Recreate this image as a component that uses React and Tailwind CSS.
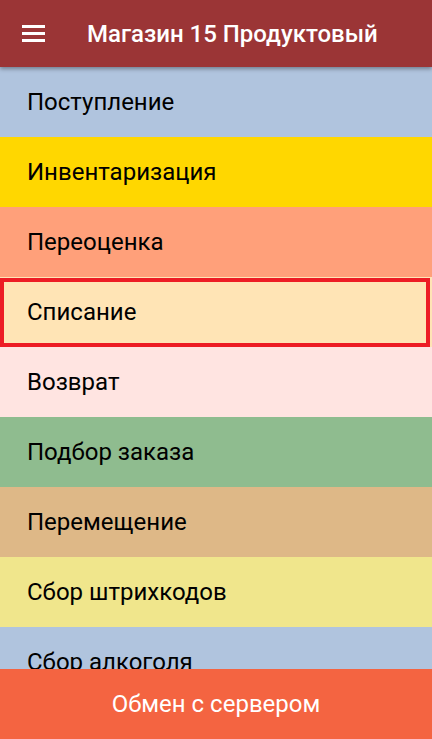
import React from 'react';

const items = [
  { label: 'Поступление', bg: 'bg-[#b0c4de]' },
  { label: 'Инвентаризация', bg: 'bg-[#ffd700]' },
  { label: 'Переоценка', bg: 'bg-[#ffa07a]' },
  { label: 'Списание', bg: 'bg-[#ffe4b5]', selected: true },
  { label: 'Возврат', bg: 'bg-[#ffe4e1]' },
  { label: 'Подбор заказа', bg: 'bg-[#8fbc8f]' },
  { label: 'Перемещение', bg: 'bg-[#deb887]' },
  { label: 'Сбор штрихкодов', bg: 'bg-[#f0e68c]' },
  { label: 'Сбор алкоголя', bg: 'bg-[#b0c4de]' },
];

export default function App() {
  return (
    <div className="flex flex-col h-[739px] w-[432px] overflow-hidden bg-white font-['Roboto',sans-serif]">
      {/* Toolbar */}
      <div className="relative z-10 flex items-center h-[67px] shrink-0 bg-[#9b3536] shadow-[0_2px_4px_rgba(0,0,0,0.35)]">
        <div className="flex flex-col gap-[4.2px] ml-[22px] w-[23px]">
          <span className="block h-[2.6px] bg-white"></span>
          <span className="block h-[2.6px] bg-white"></span>
          <span className="block h-[2.6px] bg-white"></span>
        </div>
        <span className="ml-[42px] text-[24px] font-medium text-white">Магазин 15 Продуктовый</span>
      </div>

      {/* Menu list */}
      <div className="flex-1 overflow-hidden">
        {items.map((item) => (
          <div
            key={item.label}
            className={`relative flex items-center h-[70px] pl-[27px] ${item.bg}`}
          >
            <span className="text-[24px] text-black leading-none">{item.label}</span>
            {item.selected && (
              <div className="absolute top-[1px] bottom-0 left-0 right-[2px] border-4 border-[#ed1c24] pointer-events-none"></div>
            )}
          </div>
        ))}
      </div>

      {/* Bottom action */}
      <div className="relative z-10 flex items-center justify-center h-[70px] shrink-0 bg-[#f46441]">
        <span className="text-[24px] text-white">Обмен с сервером</span>
      </div>
    </div>
  );
}
